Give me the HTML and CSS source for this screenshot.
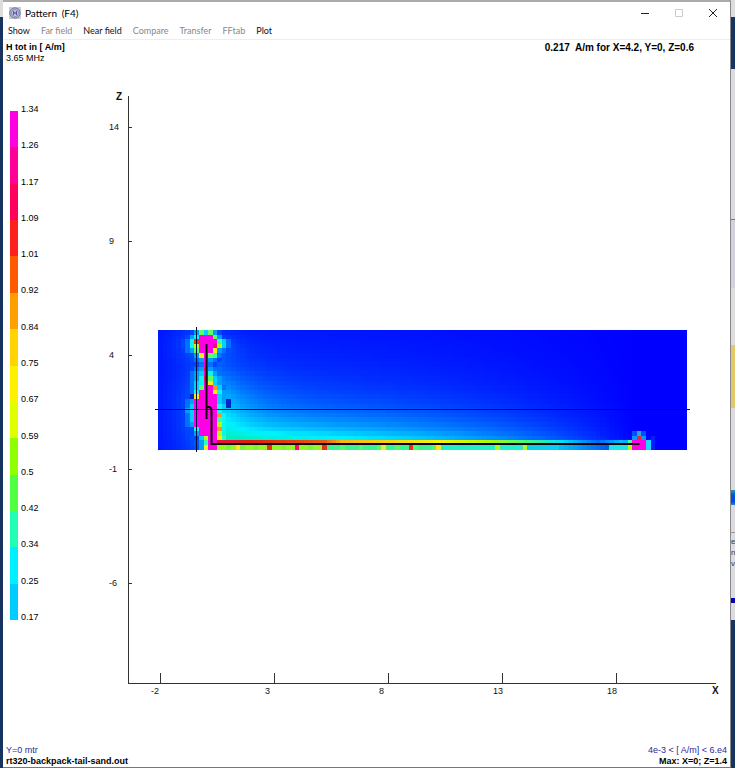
FILE: index.html
```html
<!DOCTYPE html>
<html lang="en">
<head>
<meta charset="utf-8">
<title>Pattern (F4)</title>
<link rel="stylesheet" href="styles.css">
</head>
<body>
<div class="desktop">
  <div class="strip strip-left"></div>
  <main class="window">
    <header class="titlebar">
      <svg class="app-icon" viewBox="0 0 12 12" aria-hidden="true">
        <rect width="12" height="12" fill="#c9c9d0"/>
        <circle cx="6" cy="6" r="5.2" fill="#b4b8d6" stroke="#777b9a" stroke-width="1"/>
        <circle cx="6" cy="6" r="3.4" fill="#d4d8f0" stroke="#6b70ae" stroke-width=".8"/>
        <path d="M4.7 4v4M7.3 4v4M4.7 6h2.6" stroke="#3b3f96" fill="none"/>
      </svg>
      <h1 class="title">Pattern <span class="key">(F4)</span></h1>
      <div class="controls">
        <button type="button" aria-label="Minimize"><svg viewBox="0 0 10 10"><path d="M1 5.5h8" stroke="#222"/></svg></button>
        <button type="button" aria-label="Maximize" disabled><svg viewBox="0 0 10 10"><path d="M1.5 1.5h7v7h-7z" stroke="#ccc" fill="none"/></svg></button>
        <button type="button" aria-label="Close"><svg viewBox="0 0 10 10"><path d="M1 1l8 8M9 1l-8 8" stroke="#222"/></svg></button>
      </div>
    </header>
    <nav class="menu">
      <button type="button">Show</button>
      <button type="button" disabled>Far field</button>
      <button type="button">Near field</button>
      <button type="button" disabled>Compare</button>
      <button type="button" disabled>Transfer</button>
      <button type="button" disabled>FFtab</button>
      <button type="button">Plot</button>
    </nav>
    <section class="info">
      <div><strong>H tot in [ A/m]</strong><br><span class="small">3.65 MHz</span></div>
      <strong class="reading">0.217&nbsp; A/m for X=4.2, Y=0, Z=0.6</strong>
    </section>
    <section class="view">
      <div class="legend">
        <div class="scale">
          <i class="c1"></i><i class="c2"></i><i class="c3"></i><i class="c4"></i><i class="c5"></i><i class="c6"></i><i class="c7"></i>
          <i class="c8"></i><i class="c9"></i><i class="c10"></i><i class="c11"></i><i class="c12"></i><i class="c13"></i><i class="c14"></i>
        </div>
        <ol class="values">
          <li>1.34</li><li>1.26</li><li>1.17</li><li>1.09</li><li>1.01</li><li>0.92</li><li>0.84</li><li>0.75</li>
          <li>0.67</li><li>0.59</li><li>0.5</li><li>0.42</li><li>0.34</li><li>0.25</li><li>0.17</li>
        </ol>
      </div>
      <svg class="chart" viewBox="100 88 630 612" role="img" aria-label="Near field map, X and Z in metres">
        <g id="cells" shape-rendering="crispEdges"></g>
        <g class="cross"><path d="M196.500 327v125M155 409.500h535"/></g>
        <path class="wire" d="M206.500 344v75M206.500 407h2q3 0 3 4v33h428"/>
        <g class="axis">
          <path d="M128.500 96v588M128 683.500h588M128 127.500h4M128 241.500h4M128 355.500h4M128 469.500h4M128 583.500h4M160.500 673v10M274.500 673v10M388.500 673v10M502.500 673v10M616.500 673v10"/>
        </g>
        <g class="label">
          <text class="name" x="116" y="100">Z</text>
          <text x="109" y="130">14</text><text x="109" y="244">9</text><text x="109" y="358">4</text>
          <text x="109" y="472">-1</text><text x="109" y="586">-6</text>
          <text x="151" y="694">-2</text><text x="265" y="694">3</text><text x="379" y="694">8</text>
          <text x="493" y="694">13</text><text x="607" y="694">18</text>
          <text class="name" x="712" y="694">X</text>
        </g>
      </svg>
    </section>
    <footer class="status">
      <div><span class="blue">Y=0 mtr</span><br><strong>rt320-backpack-tail-sand.out</strong></div>
      <div class="right"><span class="blue">4e-3 &lt; [ A/m] &lt; 6.e4</span><br><strong>Max: X=0; Z=1.4</strong></div>
    </footer>
  </main>
  <div class="strip strip-right"><p>e<br>n<br>v</p></div>
</div>
<script src="field.js"></script>
</body>
</html>
```
FILE: styles.css
```css
* { box-sizing: border-box; }
body { margin: 0; background: #fff; color: #000; font: 9px/11px "Liberation Sans", Arial, sans-serif; }
.desktop { display: grid; grid-template-columns: 3px minmax(0, 1fr) 4px; min-height: 100vh; }
.strip-left { background: linear-gradient(#ddd 17px, #17335f 17px); }
.strip-right {
  padding-top: 536px;
  background: linear-gradient(#ddd 0 17px, #17335f 17px 69px, #dcdce0 69px 219px, #777 219px 220px,
    #d2d2dc 220px 288px, #dedee0 288px 345px, #e3c96b 345px 408px, #dcdce0 408px 490px,
    #20a0b0 490px, #0050e0 495px 502px, #3080e0 505px, #dcdce0 505px 532px, #999 532px 533px,
    #dcdce0 533px 598px, #0000b8 598px 603px, #dcdce0 603px 620px, #17335f 620px);
}
.strip-right p { margin: 0; color: #333; font-size: 8px; }
.window { display: flex; flex-direction: column; background: #fff; border-top: 2px solid #aaa; border-right: 1px solid #888; border-bottom: 1px solid #777; }
.titlebar { display: flex; align-items: center; height: 21px; padding-left: 6px; }
.app-icon { width: 12px; height: 12px; margin-right: 4px; }
.title { margin: 0; font-size: 10px; font-weight: 400; line-height: 20px; }
.title, .menu button { font-family: Lato, "Open Sans", sans-serif; }
.key { margin-left: 2px; }
.controls { display: flex; margin-left: auto; }
.controls button { display: grid; place-items: center; width: 34px; height: 20px; padding: 0; border: 0; background: none; }
.controls svg { width: 10px; height: 10px; fill: none; }
.menu { display: flex; gap: 11px; height: 17px; padding-left: 5px; border-bottom: 1px solid #eee; }
.menu button { padding: 0; border: 0; background: none; color: #111; font-size: 9px; line-height: 16px; }
.menu button:disabled { color: #888; }
.info { display: flex; justify-content: space-between; padding: 2px 36px 0 3px; }
.reading { font-size: 10px; }
.view { display: flex; flex: 1; align-items: flex-start; padding-top: 24px; }
.legend { display: flex; flex: 0 0 97px; height: 532px; padding: 15px 0 0 7px; overflow: hidden; }
.scale { display: grid; grid-template-rows: repeat(14, 1fr); width: 8px; margin-top: 8px; }
.values { display: flex; flex-direction: column; justify-content: space-between; height: 521px; margin: 0; padding: 0 0 0 3px; list-style: none; }
.values li { line-height: 13px; }
.chart { flex: 1; min-width: 0; }
.c1 { background: #ff00e0; } .c2 { background: #ff0096; } .c3 { background: #ff005c; }
.c4 { background: #ff2020; } .c5 { background: #ff5a00; } .c6 { background: #ffa000; }
.c7 { background: #ffd400; } .c8 { background: #fff000; } .c9 { background: #e0ff00; }
.c10 { background: #90ff00; } .c11 { background: #50ff40; } .c12 { background: #20ffb4; }
.c13 { background: #00f0ff; } .c14 { background: #00ccff; }
.axis path { fill: none; stroke: #333; }
.cross path { fill: none; stroke: #00103c; }
.wire { fill: none; stroke: #10000c; stroke-width: 2; }
.label { font-size: 9px; fill: #111; }
.name { font-size: 10px; font-weight: 700; }
.status { display: flex; justify-content: space-between; padding: 0 3px; }
.right { text-align: right; }
.blue { color: #2a2aa0; }
```
FILE: field.js
```js
// Field magnitude cells, 116 x 26 samples at 0.2 m spacing.
const COLS = 116, ROWS = 26, X0 = 158, Y0 = 330, W = 529 / COLS, H = 119.5 / ROWS;
const KEY = {
  n: '#0024d0', b: '#0046ff', 1: '#0070ff', 2: '#00a0f8', 3: '#00d0ff', 4: '#10f4f0',
  g: '#30ffb0', G: '#60ff60', l: '#b0ff10', y: '#ffe818', o: '#ff9020', r: '#e83018',
  p: '#f0106c', m: '#ff00e6'
};
// Columns 5 to 16 around the vertical radiator; a dot leaves the far field value.
const NEAR = [
  '..b2G3G2b...', '.b24mmmG2...', 'b14rmmmmg31.', 'b14lmmmpl31.', '.12Gmmmy21..', '..b2ymGg1...',
  '..b12m21b...', '...b1m1b....', '..b12p21....', '..123m421...', '..124pG32...', '..134my32...',
  '..13Gmmo31..', '..14mmmy42..', '.bnymmmm32..', '.12mmmmm32n.', '.13mmmmm43n.', '.23mmmmm43..',
  '.13mmmmmo4..', '.13mmmmmg4..', '.12mmmmml4..', '..b4mmmmo4..', '..b2mmmml4..', '...b3lmmyg..',
  '....2gmm....', '....2ymm....'
];
const stops = [[13, 225, 20, 60], [20, 225, 30, 10], [36, 235, 90, 20], [40, 250, 180, 20], [61, 245, 245, 10],
  [72, 170, 250, 10], [80, 70, 250, 120], [88, 0, 225, 245], [96, 0, 100, 255], [101, 0, 190, 255], [116, 0, 0, 255]];

function ramp(c) {
  let k = 1;
  while (k < stops.length - 1 && stops[k][0] < c) k++;
  const a = stops[k - 1], b = stops[k], t = (c - a[0]) / (b[0] - a[0]);
  return 'rgb(' + [1, 2, 3].map(i => Math.round(a[i] + (b[i] - a[i]) * t)).join() + ')';
}

function far(c, r) {
  const h = 24 - r;
  if (c < 10) {
    const near = 100 * Math.exp(-(9 - c) / 3) * Math.exp(-Math.pow((r - 17) / 9, 2));
    const top = 80 * Math.exp(-(9 - c) / 3) * Math.exp(-Math.pow((r - 3) / 3, 2));
    return `rgb(0,${Math.round(22 + c * 3 + near + top)},255)`;
  }
  const f = Math.max(0, 1 - Math.pow(c / 104, 2));
  let g = (205 * Math.exp(-Math.max(0, h - 1) / 5) + 80 * Math.exp(-h / 20)) * f;
  g += 140 * Math.exp(-(c - 12) / 7) * Math.exp(-Math.pow((r - 16) / 9, 2));
  g += 90 * Math.exp(-(c - 12) / 3) * Math.exp(-Math.pow((r - 3) / 3, 2));
  const extra = Math.max(0, g - 245);
  return `rgb(0,${Math.round(Math.min(240, g))},${Math.round(255 - Math.min(60, extra))})`;
}

function colour(c, r) {
  const near = c >= 5 && c <= 16 ? NEAR[r][c - 5] : '.';
  if (near !== '.') return KEY[near];
  if (c >= 104 && c <= 106 && r >= 24) return KEY.m;
  if (c === 105 && r === 23) return '#e82838';
  if (c === 105 && r === 22) return '#30a0e8';
  if ((c === 104 || c === 106) && (r === 23 || r === 22)) return r === 23 ? '#0098ff' : '#0050ff';
  if ((c === 103 || c === 107) && r >= 24) return c === 103 ? (r === 25 ? KEY.l : KEY.g) : '#20d8ff';
  if (c > 107) return c === 108 && r > 22 ? '#0020ff' : '#0000ff';
  if (r === 24 && c >= 13) return ramp(c);
  if (r === 25 && c >= 13) {
    const spots = { 17: 'y', 24: 'r', 30: 'p', 36: 'r', 49: 'y', 55: 'r', 61: 'y', 74: 'l', 80: 'l', 86: '3' };
    if (spots[c]) return KEY[spots[c]];
    if (c < 37) return c % 3 ? '#94f820' : '#78f43c';
    if (c < 62) return c % 4 ? '#38f490' : '#58f868';
    if (c < 80) return '#20f0c8';
    if (c < 88) return '#08d0e8';
    return c < 99 ? `rgb(0,${190 - (c - 88) * 10},245)` : '#18e8e8';
  }
  return far(c, r);
}

const group = document.getElementById('cells');
for (let r = 0; r < ROWS; r++) {
  for (let c = 0; c < COLS; c++) {
    const cell = document.createElementNS('http://www.w3.org/2000/svg', 'rect');
    cell.setAttribute('x', X0 + c * W);
    cell.setAttribute('y', Y0 + r * H);
    cell.setAttribute('width', W);
    cell.setAttribute('height', H);
    cell.setAttribute('fill', colour(c, r));
    group.append(cell);
  }
}
```
